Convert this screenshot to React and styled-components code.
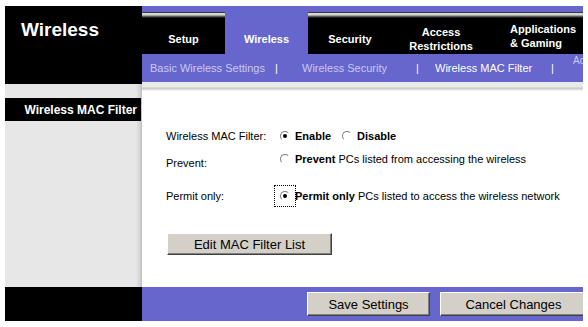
import React from "react";
import styled, { createGlobalStyle } from "styled-components";

const GlobalStyle = createGlobalStyle`
  html, body { margin: 0; padding: 0; background: #fff; }
  body { font-family: "Liberation Sans", Arial, sans-serif; }
`;

const Page = styled.div`
  margin: 6px 0 0 5px;
  width: 578px;
  overflow: hidden;
  display: grid;
  grid-template-columns: 137px 441px;
  grid-template-rows: 281px 34px;
`;

const LeftColumn = styled.div`
  display: flex;
  flex-direction: column;
`;

const Brand = styled.div`
  height: 78px;
  background: #000;
  padding: 13px 0 0 16px;
  box-sizing: border-box;
`;

const BrandTitle = styled.div`
  color: #fff;
  font-weight: bold;
  font-size: 19px;
  line-height: 22px;
`;

const Sidebar = styled.div`
  flex: 1;
  padding-top: 14px;
  background: linear-gradient(to right, #e7e7e7 0, #e7e7e7 131px, #d2d2d2 135px, #bdbdbd 137px);
`;

const SideTitle = styled.div`
  height: 23px;
  background: #000;
  color: #fff;
  font-weight: bold;
  font-size: 12px;
  display: flex;
  align-items: center;
  justify-content: flex-end;
  padding-right: 4px;
  margin-right: 0;
  width: 132px;
`;

const RightColumn = styled.div`
  display: flex;
  flex-direction: column;
  background: #fff;
`;

const NavBand = styled.div`
  height: 6px;
  background: #6666cc;
`;

const Tabs = styled.div`
  height: 42px;
  display: flex;
`;

const Tab = styled.div`
  ${(p) => (p.$grow ? "flex: 1;" : `width: ${p.$w}px; flex: none;`)}
  box-sizing: border-box;
  background: ${(p) =>
    p.$active
      ? "#6666cc"
      : "linear-gradient(to bottom, #3a3a3a 0, #3a3a3a 1px, #dcdcdc 1px, #cfcfcf 3px, #777 4px, #000 6px, #000 100%)"};
  color: #fff;
  font-weight: bold;
  font-size: 11px;
  line-height: 14px;
  display: flex;
  align-items: center;
  justify-content: ${(p) => (p.$left ? "flex-start" : "center")};
  text-align: ${(p) => (p.$left ? "left" : "center")};
  padding: ${(p) => (p.$left ? "6px 0 0 20px" : "12px 0 0 0")};
  white-space: nowrap;
  overflow: hidden;
`;

const SubNav = styled.div`
  height: 28px;
  background: #6666cc;
  display: flex;
  align-items: center;
  padding-left: 8px;
  font-size: 11px;
  overflow: hidden;
`;

const SubItem = styled.div`
  width: ${(p) => p.$w}px;
  flex: none;
  white-space: nowrap;
  overflow: hidden;
  color: ${(p) => (p.$active ? "#ffffff" : "#c9c9f2")};
`;

const SubSep = styled.div`
  width: ${(p) => p.$w}px;
  flex: none;
  color: #fff;
`;

const SubCut = styled.div`
  flex: 1;
  align-self: flex-start;
  padding-top: 1px;
  overflow: hidden;
  white-space: nowrap;
  color: #c9c9f2;
  font-size: 10px;
`;

const Strip = styled.div`
  height: 9px;
  background: linear-gradient(to bottom, #eaeaea 0, #eaeaea 5px, #c4c4c4 6px, #e8e8e8 8px, #fff 9px);
`;

const Content = styled.div`
  flex: 1;
  background: #fff;
  padding: 35px 0 0 24px;
  font-size: 11px;
  color: #000;
`;

const Row = styled.div`
  display: grid;
  grid-template-columns: 114px 1fr;
  height: ${(p) => p.$h}px;
  align-items: center;
`;

const Label = styled.div`
  white-space: nowrap;
`;

const Value = styled.div`
  display: flex;
  align-items: center;
  white-space: nowrap;
  ${(p) => (p.$raise ? `margin-bottom: ${p.$raise * 2}px;` : "")}
`;

const Radio = styled.span`
  width: 10px;
  height: 10px;
  box-sizing: border-box;
  border-radius: 50%;
  border: 1px solid;
  border-color: #7a7a7a #ffffff #ffffff #7a7a7a;
  background: #fff;
  display: inline-flex;
  align-items: center;
  justify-content: center;
  flex: none;
  margin-right: ${(p) => (p.$tight ? 0 : 5)}px;
  &::after {
    content: "";
    width: 4px;
    height: 4px;
    border-radius: 50%;
    background: ${(p) => (p.$checked ? "#000" : "transparent")};
  }
`;

const FocusRing = styled.span`
  width: 22px;
  height: 22px;
  box-sizing: border-box;
  border: 1px dotted #000;
  display: inline-flex;
  align-items: center;
  justify-content: center;
  margin: 0 -1px 0 -6px;
  flex: none;
`;

const Strong = styled.b`
  font-weight: bold;
`;

const Gap = styled.span`
  display: inline-block;
  width: ${(p) => p.$w}px;
`;

const Button = styled.button`
  width: ${(p) => p.$w}px;
  height: ${(p) => p.$h}px;
  flex: none;
  background: #d4d0c8;
  border: 1px solid;
  border-color: #ffffff #404040 #404040 #ffffff;
  box-shadow: inset -1px -1px 0 #808080;
  font-family: "Liberation Sans", Arial, sans-serif;
  font-size: 13px;
  color: #000;
  padding: 0;
  margin: 0;
`;

const EditWrap = styled.div`
  margin: 21px 0 0 1px;
`;

const FooterLeft = styled.div`
  background: #000;
`;

const FooterBar = styled.div`
  background: #6666cc;
  display: flex;
  align-items: center;
  padding-left: 165px;
  gap: 10px;
  overflow: hidden;
`;

export default function App() {
  return (
    <>
      <GlobalStyle />
      <Page>
        <LeftColumn>
          <Brand>
            <BrandTitle>Wireless</BrandTitle>
          </Brand>
          <Sidebar>
            <SideTitle>Wireless MAC Filter</SideTitle>
          </Sidebar>
        </LeftColumn>
        <RightColumn>
          <NavBand />
          <Tabs>
            <Tab $w={83}>Setup</Tab>
            <Tab $w={83} $active>Wireless</Tab>
            <Tab $w={84}>Security</Tab>
            <Tab $w={98}>
              Access
              <br />
              Restrictions
            </Tab>
            <Tab $grow $left>
              Applications
              <br />
              &amp; Gaming
            </Tab>
          </Tabs>
          <SubNav>
            <SubItem $w={125}>Basic Wireless Settings</SubItem>
            <SubSep $w={27}>|</SubSep>
            <SubItem $w={114}>Wireless Security</SubItem>
            <SubSep $w={19}>|</SubSep>
            <SubItem $w={116} $active>Wireless MAC Filter</SubItem>
            <SubSep $w={22}>|</SubSep>
            <SubCut>Advanced Wireless Settings</SubCut>
          </SubNav>
          <Strip />
          <Content>
            <Row $h={20}>
              <Label>Wireless MAC Filter:</Label>
              <Value>
                <Radio $checked />
                <Strong>Enable</Strong>
                <Gap $w={11} />
                <Radio />
                <Strong>Disable</Strong>
              </Value>
            </Row>
            <Row $h={34}>
              <Label>Prevent:</Label>
              <Value $raise={4}>
                <Radio />
                <span>
                  <Strong>Prevent</Strong> PCs listed from accessing the wireless
                </span>
              </Value>
            </Row>
            <Row $h={32}>
              <Label>Permit only:</Label>
              <Value>
                <FocusRing>
                  <Radio $checked $tight />
                </FocusRing>
                <span>
                  <Strong>Permit only</Strong> PCs listed to access the wireless network
                </span>
              </Value>
            </Row>
            <EditWrap>
              <Button $w={165} $h={22}>Edit MAC Filter List</Button>
            </EditWrap>
          </Content>
        </RightColumn>
        <FooterLeft />
        <FooterBar>
          <Button $w={123} $h={24}>Save Settings</Button>
          <Button $w={147} $h={24}>Cancel Changes</Button>
        </FooterBar>
      </Page>
    </>
  );
}
